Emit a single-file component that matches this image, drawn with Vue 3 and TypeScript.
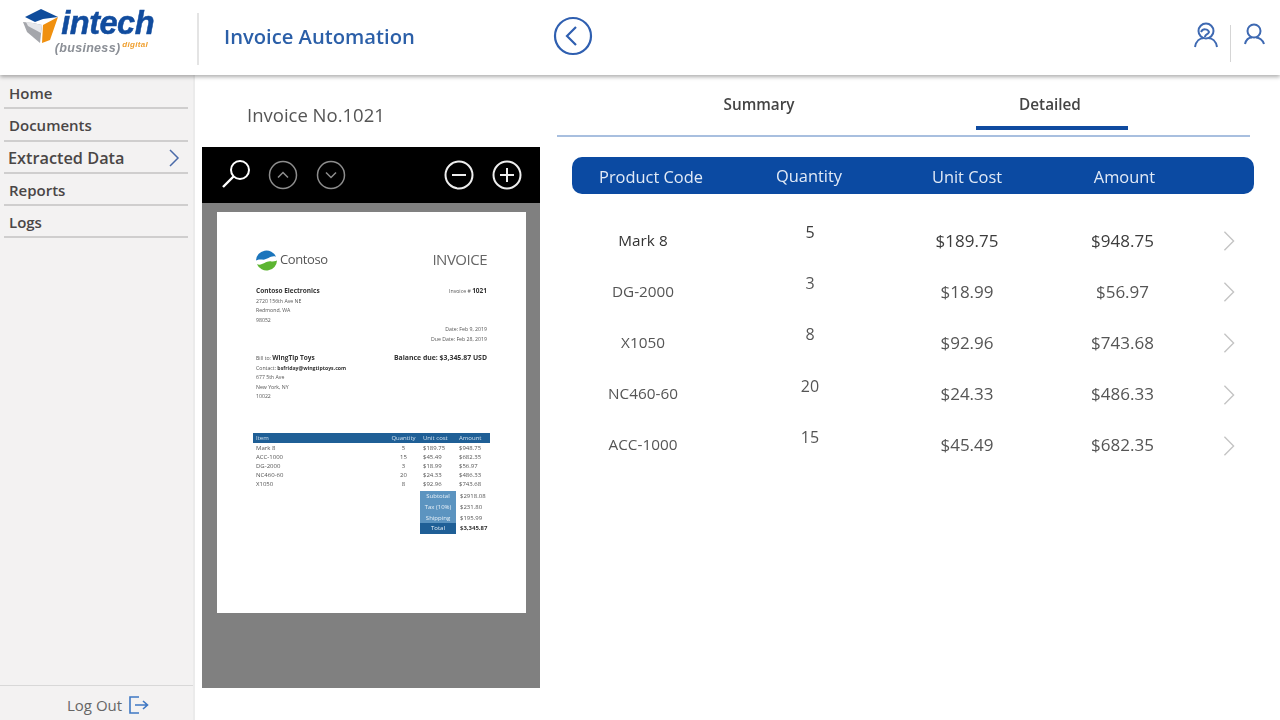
<script setup lang="ts">
const menu = ['Home', 'Documents', 'Extracted Data', 'Reports', 'Logs']

const rows = [
  { code: 'Mark 8', qty: 5, unit: '$189.75', amount: '$948.75' },
  { code: 'DG-2000', qty: 3, unit: '$18.99', amount: '$56.97' },
  { code: 'X1050', qty: 8, unit: '$92.96', amount: '$743.68' },
  { code: 'NC460-60', qty: 20, unit: '$24.33', amount: '$486.33' },
  { code: 'ACC-1000', qty: 15, unit: '$45.49', amount: '$682.35' },
]

const docRows = [
  ['Mark 8', '5', '$189.75', '$948.75'],
  ['ACC-1000', '15', '$45.49', '$682.35'],
  ['DG-2000', '3', '$18.99', '$56.97'],
  ['NC460-60', '20', '$24.33', '$486.33'],
  ['X1050', '8', '$92.96', '$743.68'],
]

const docTotals = [
  ['Subtotal', '$2918.08'],
  ['Tax (10%)', '$231.80'],
  ['Shipping', '$195.99'],
  ['Total', '$3,345.87'],
]
</script>

<template>
  <div class="app">
    <header class="topbar">
      <div class="logo">
        <svg viewBox="0 0 36 38" width="36" height="38">
          <polygon points="0,14 4,24 17,35 19,17 10,15" fill="#a4a6ab" />
          <polygon points="3,14 10,15 19,17 18,25 5,18" fill="#e6e7ea" />
          <polygon points="35,9 27,32 19,35 20,17" fill="#f0900f" />
          <polygon points="2,9 18,1 35,9 20,11 12,14" fill="#0f4c9c" />
        </svg>
        <div class="logo-words">
          <span class="logo-name">intech</span>
          <span class="logo-sub">(business)<sup>digital</sup></span>
        </div>
      </div>
      <div class="top-sep"></div>
      <div class="app-title">Invoice Automation</div>
      <button class="back-btn">
        <svg viewBox="0 0 40 40" width="40" height="40">
          <circle cx="20" cy="20" r="18" fill="none" stroke="#2f5fb0" stroke-width="2.2" />
          <path d="M23 11 L14 20 L23 29" fill="none" stroke="#2f5fb0" stroke-width="2.2" />
        </svg>
      </button>
      <div class="top-icons">
        <svg class="user-left" viewBox="0 0 26 28" width="26" height="28">
          <circle cx="13" cy="10" r="7.5" fill="none" stroke="#3e69b2" stroke-width="2" />
          <path d="M2 26 C3 20 7 17 11 17 M24 26 C23 20 19 17 15 17" fill="none" stroke="#3e69b2" stroke-width="2" />
          <path d="M8 11 C10 7 15 8 16 11 C15 14 12 13 12 16" fill="none" stroke="#3e69b2" stroke-width="2" />
        </svg>
        <div class="icon-sep"></div>
        <svg class="user-right" viewBox="0 0 24 26" width="24" height="26">
          <circle cx="12" cy="9" r="6.5" fill="none" stroke="#3e69b2" stroke-width="2" />
          <path d="M3 22 C4 18 7 15.500 10 15.500 M22 22 C21 18 17 15.500 14 15.500" fill="none" stroke="#3e69b2" stroke-width="2" />
        </svg>
      </div>
    </header>

    <div class="body">
      <aside class="sidebar">
        <nav class="menu">
          <div
            v-for="item in menu"
            :key="item"
            class="menu-item"
            :class="{ 'menu-item-wide': item === 'Extracted Data' }"
          >
            <span>{{ item }}</span>
            <svg v-if="item === 'Extracted Data'" viewBox="0 0 12 18" width="12" height="18">
              <path d="M2 1 L10 9 L2 17" fill="none" stroke="#4a6aa8" stroke-width="1.5" />
            </svg>
          </div>
        </nav>
        <div class="logout">
          <span>Log Out</span>
          <svg viewBox="0 0 22 20" width="22" height="20">
            <path d="M11 2 H2 V18 H11" fill="none" stroke="#3f78c4" stroke-width="1.6" />
            <path d="M7 10 H19 M15 6 L19.500 10 L15 14" fill="none" stroke="#3f78c4" stroke-width="1.6" />
          </svg>
        </div>
      </aside>

      <section class="viewer">
        <h2 class="invoice-no">Invoice No.1021</h2>
        <div class="toolbar">
          <svg class="tool-search" viewBox="0 0 32 32" width="32" height="32">
            <circle cx="19" cy="12" r="9" fill="none" stroke="#fff" stroke-width="2" />
            <path d="M12.500 18.500 L2 29" stroke="#fff" stroke-width="2.4" />
          </svg>
          <svg viewBox="0 0 30 30" width="30" height="30">
            <circle cx="15" cy="15" r="13.500" fill="none" stroke="#8d8d8d" stroke-width="1.5" />
            <path d="M10 17.500 L15 12.500 L20 17.500" fill="none" stroke="#8d8d8d" stroke-width="1.5" />
          </svg>
          <svg viewBox="0 0 30 30" width="30" height="30">
            <circle cx="15" cy="15" r="13.500" fill="none" stroke="#8d8d8d" stroke-width="1.5" />
            <path d="M10 12.500 L15 17.500 L20 12.500" fill="none" stroke="#8d8d8d" stroke-width="1.5" />
          </svg>
          <svg class="tool-minus" viewBox="0 0 30 30" width="30" height="30">
            <circle cx="15" cy="15" r="13.500" fill="none" stroke="#eee" stroke-width="2" />
            <path d="M8 15 H22" stroke="#eee" stroke-width="2" />
          </svg>
          <svg viewBox="0 0 30 30" width="30" height="30">
            <circle cx="15" cy="15" r="13.500" fill="none" stroke="#eee" stroke-width="2" />
            <path d="M8 15 H22 M15 8 V22" stroke="#eee" stroke-width="2" />
          </svg>
        </div>
        <div class="doc-wrap">
          <div class="paper">
            <div class="doc-head">
              <div class="contoso">
                <svg viewBox="0 0 24 24" width="23" height="23">
                  <path d="M1 12 A11 11 0 0 1 22 8 C16 6 13 12 7 11 C5 11 3 11 1 12 Z" fill="#1b75bc" />
                  <path d="M23 12 A11 11 0 0 1 2 16 C8 18 11 12 17 13 C19 13 21 13 23 12 Z" fill="#5cb531" />
                </svg>
                <span>Contoso</span>
              </div>
              <span class="doc-title">INVOICE</span>
            </div>

            <div class="doc-split doc-seller">
              <div>
                <b class="doc-strong">Contoso Electronics</b>
                <p>2720 156th Ave NE</p>
                <p>Redmond, WA</p>
                <p>98052</p>
              </div>
              <div>
                <p>Invoice # <b class="doc-strong">1021</b></p>
              </div>
            </div>

            <div class="doc-dates">
              <p>Date: Feb 9, 2019</p>
              <p>Due Date: Feb 28, 2019</p>
            </div>

            <div class="doc-split doc-buyer">
              <div>
                <p>Bill to: <b class="doc-strong">WingTip Toys</b></p>
                <p>Contact: <b>bsfriday@wingtiptoys.com</b></p>
                <p>677 5th Ave</p>
                <p>New York, NY</p>
                <p>10022</p>
              </div>
              <div>
                <b class="doc-balance">Balance due: $3,345.87 USD</b>
              </div>
            </div>

            <div class="doc-table">
              <div class="doc-row doc-row-head">
                <span>Item</span><span>Quantity</span><span>Unit cost</span><span>Amount</span>
              </div>
              <div v-for="r in docRows" :key="r[0]" class="doc-row">
                <span v-for="c in r" :key="c">{{ c }}</span>
              </div>
              <div class="doc-totals">
                <div v-for="t in docTotals" :key="t[0]" class="doc-total">
                  <span class="doc-total-label" :class="{ 'is-total': t[0] === 'Total' }">{{ t[0] }}</span>
                  <span class="doc-total-value" :class="{ 'is-bold': t[0] === 'Total' }">{{ t[1] }}</span>
                </div>
              </div>
            </div>
          </div>
        </div>
      </section>

      <section class="details">
        <div class="tabs">
          <div class="tab">Summary</div>
          <div class="tab tab-active">Detailed</div>
        </div>

        <div class="table-head">
          <span>Product Code</span>
          <span class="head-qty">Quantity</span>
          <span>Unit Cost</span>
          <span>Amount</span>
        </div>

        <div
          v-for="(row, i) in rows"
          :key="row.code"
          class="table-row"
          :class="{ 'row-first': i === 0 }"
        >
          <span class="cell-code">{{ row.code }}</span>
          <span class="cell-qty">{{ row.qty }}</span>
          <span class="cell-money">{{ row.unit }}</span>
          <span class="cell-money cell-amount">{{ row.amount }}</span>
          <svg class="row-chevron" viewBox="0 0 14 24" width="14" height="22">
            <path d="M2 2 L12 12 L2 22" fill="none" stroke="#c4c4c4" stroke-width="1.5" />
          </svg>
        </div>
      </section>
    </div>
  </div>
</template>

<style>
html, body {
  margin: 0;
  background: #fff;
}
</style>

<style scoped>
.app {
  width: 1280px;
  height: 720px;
  overflow: hidden;
  display: flex;
  flex-direction: column;
  font-family: "Open Sans", sans-serif;
  color: #444;
  filter: blur(0.55px);
}

.topbar {
  height: 75px;
  flex: none;
  box-sizing: border-box;
  padding-bottom: 3px;
  display: flex;
  align-items: center;
  position: relative;
  z-index: 1;
  background: #fff;
  box-shadow: 0 2px 4px rgba(0, 0, 0, 0.32);
}

.logo {
  width: 197px;
  height: 75px;
  flex: none;
  align-self: flex-start;
  box-sizing: border-box;
  padding: 8px 0 0 23px;
  display: flex;
  gap: 2px;
  align-items: flex-start;
}

.logo-words {
  display: flex;
  flex-direction: column;
  align-items: flex-end;
  width: 93px;
}

.logo-name {
  font-family: "Liberation Sans", sans-serif;
  font-weight: 700;
  font-style: italic;
  font-size: 32.5px;
  line-height: 31px;
  letter-spacing: -0.5px;
  color: #114c9e;
  -webkit-text-stroke: 0.5px #114c9e;
}

.logo-sub {
  font-family: "Liberation Sans", sans-serif;
  font-weight: 700;
  font-style: italic;
  font-size: 12.5px;
  line-height: 13px;
  letter-spacing: 0.3px;
  white-space: nowrap;
  color: #8b8f96;
  margin-top: 3px;
  margin-right: 6px;
}

.logo-sub sup {
  font-size: 8px;
  line-height: 0;
  margin-left: 2px;
  color: #f0a030;
}

.top-sep {
  width: 2px;
  height: 52px;
  flex: none;
  align-self: flex-start;
  margin-top: 13px;
  background: #e4e4e4;
}

.app-title {
  margin-left: 25px;
  width: 329px;
  font-size: 20.2px;
  font-weight: 600;
  color: #2b5fa8;
}

.back-btn {
  padding: 0;
  border: 0;
  background: none;
  display: flex;
}

.top-icons {
  margin-left: auto;
  margin-right: 14px;
  align-self: flex-start;
  margin-top: 16px;
  display: flex;
  align-items: flex-start;
  gap: 11px;
}

.user-left {
  margin-top: 5px;
}

.user-right {
  margin-top: 6px;
}

.icon-sep {
  width: 1px;
  height: 37px;
  margin-top: 9px;
  background: #d5d5d5;
}

.body {
  flex: 1;
  display: flex;
  min-height: 0;
}

.sidebar {
  width: 195px;
  flex: none;
  display: flex;
  flex-direction: column;
  background: #f3f2f2;
  border-right: 2px solid #ebebeb;
  box-sizing: border-box;
  padding-top: 2px;
}

.menu {
  flex: 1;
  padding: 0 5px 0 4px;
}

.menu-item {
  height: 32.3px;
  box-sizing: border-box;
  padding: 2px 8px 0 5px;
  display: flex;
  justify-content: space-between;
  align-items: center;
  border-bottom: 2px solid #cfcece;
  font-size: 15px;
  font-weight: 600;
  color: #4a4646;
}

.menu-item-wide span {
  margin-left: -1px;
  font-size: 16.3px;
}

.logout {
  height: 35px;
  box-sizing: border-box;
  border-top: 1px solid #d8d8d8;
  padding: 4px 0 0 67px;
  display: flex;
  align-items: center;
  gap: 6px;
  font-size: 15px;
  color: #666;
}

.viewer {
  width: 338px;
  margin-left: 7px;
  flex: none;
  display: flex;
  flex-direction: column;
}

.invoice-no {
  margin: 0;
  height: 72px;
  padding: 7px 0 0 45px;
  box-sizing: border-box;
  display: flex;
  align-items: center;
  font-size: 18.5px;
  font-weight: 400;
  color: #555;
}

.toolbar {
  height: 56px;
  background: #000;
  display: flex;
  align-items: center;
  gap: 18px;
  padding: 0 18px 0 19px;
}

.tool-search {
  margin: -2px -3px 0 0;
}

.tool-minus {
  margin-left: auto;
}

.doc-wrap {
  height: 485px;
  background: #808080;
  padding: 9px 14px 0 15px;
  box-sizing: border-box;
}

.paper {
  width: 309px;
  height: 401px;
  box-sizing: border-box;
  background: #fff;
  padding: 36px 39px 0;
  font-size: 5.2px;
  line-height: 9.5px;
  color: #555;
  filter: blur(0.3px);
}

.paper p {
  margin: 0;
}

.paper b {
  color: #333;
  white-space: nowrap;
}

.doc-strong {
  font-size: 6.5px;
}

.doc-balance {
  font-size: 6.9px;
}

.doc-head {
  display: flex;
  justify-content: space-between;
  align-items: center;
  height: 24px;
}

.contoso {
  display: flex;
  align-items: center;
  gap: 2px;
  margin-left: -1px;
  font-size: 13px;
  letter-spacing: -0.4px;
  color: #555;
}

.doc-title {
  font-size: 15px;
  letter-spacing: -0.5px;
  color: #666;
}

.doc-split {
  display: flex;
  justify-content: space-between;
}

.doc-seller {
  margin-top: 14px;
}

.doc-dates {
  text-align: right;
}

.doc-buyer {
  margin-top: 9px;
}

.doc-table {
  margin: 31px -3px 0;
  font-size: 6px;
}

.doc-row {
  display: grid;
  grid-template-columns: 128px 39px 36px 34px;
  height: 9.2px;
  line-height: 9.2px;
  padding-left: 3px;
  white-space: nowrap;
}

.doc-row span:nth-child(2) {
  text-align: center;
}

.doc-row-head {
  height: 10px;
  line-height: 10px;
  margin-bottom: 1px;
  background: #1f5f96;
  color: #cfe0ee;
}

.doc-totals {
  margin-top: 2px;
}

.doc-total {
  display: flex;
  height: 10.6px;
  line-height: 10.6px;
  padding-left: 167px;
}

.doc-total-label {
  width: 36px;
  text-align: center;
  white-space: nowrap;
  background: #5c94c0;
  color: #e8f1f8;
}

.doc-total-label.is-total {
  background: #1f5f96;
}

.doc-total-value {
  margin-left: 4px;
  white-space: nowrap;
}

.doc-total-value.is-bold {
  font-weight: 700;
  color: #333;
}

.details {
  margin-left: 17px;
  flex: 1;
  padding-right: 26px;
}

.tabs {
  width: 693px;
  height: 62px;
  box-sizing: border-box;
  border-bottom: 2px solid #a8bfdf;
  display: flex;
  font-size: 15.3px;
  font-weight: 600;
  color: #444;
}

.tab {
  height: 55px;
  box-sizing: border-box;
  padding-top: 19px;
  text-align: center;
  white-space: nowrap;
  width: 152px;
  margin-left: 126px;
}

.tab-active {
  margin-left: 141px;
  padding-right: 4px;
  border-bottom: 4px solid #0f4ba0;
}

.table-head,
.table-row {
  margin-left: 15px;
  width: 682px;
  display: grid;
  grid-template-columns: 158px 158px 158px 157px 51px;
  align-items: center;
  justify-items: center;
}

.table-head {
  margin-top: 20px;
  height: 37px;
  box-sizing: border-box;
  padding-top: 2px;
  border-radius: 10px;
  background: #0b4aa2;
  color: #e2eaf6;
  font-size: 16.4px;
}

.head-qty {
  margin-bottom: 3px;
}

.table-row {
  height: 51.2px;
  font-size: 17px;
  color: #555;
}

.table-head + .table-row {
  margin-top: 20px;
}

.cell-code {
  font-size: 15.3px;
  margin-right: 16px;
}

.cell-qty {
  font-size: 16px;
  margin: 0 0 15px 2px;
}

.cell-money {
  margin-top: 1px;
}

.cell-amount {
  margin-right: 4px;
}

.row-chevron {
  margin-top: 3px;
}

.row-first .cell-code {
  color: #333;
  font-weight: 500;
}

.row-first .cell-qty,
.row-first .cell-money {
  color: #3d3d3d;
  font-weight: 500;
}
</style>
